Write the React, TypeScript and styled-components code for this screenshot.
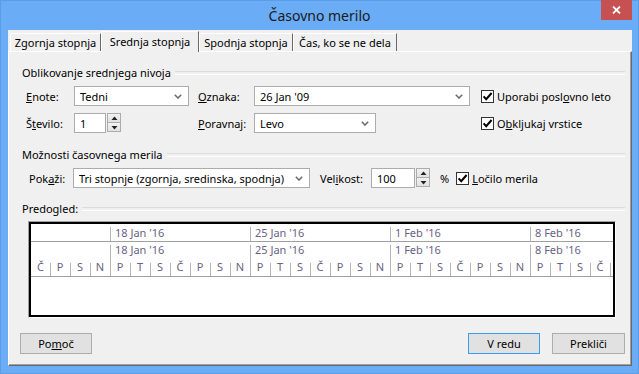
import React from 'react'
import styled, { createGlobalStyle } from 'styled-components'

const GlobalStyle = createGlobalStyle`
  html, body {
    margin: 0;
    padding: 0;
  }
  body {
    font-family: 'Noto Sans', 'Open Sans', sans-serif;
    font-size: 11px;
    color: #000;
  }
  * {
    box-sizing: border-box;
  }
`

const Window = styled.div`
  width: 639px;
  height: 374px;
  background: #6aacf5;
  display: flex;
  flex-direction: column;
  box-shadow: inset 0 0 0 1px #5c9de6;
`

const TitleBar = styled.div`
  height: 30px;
  flex: none;
  display: grid;
  grid-template-columns: 1fr auto 1fr;
  align-items: center;
`

const Title = styled.div`
  grid-column: 2;
  font-size: 14px;
  color: #1a1a1a;
  padding-top: 1px;
`

const CloseButton = styled.div`
  grid-column: 3;
  justify-self: end;
  align-self: start;
  width: 31px;
  height: 20px;
  margin-right: 7px;
  background: #c75050;
  display: flex;
  align-items: center;
  justify-content: center;
`

const Body = styled.div`
  flex: 1;
  margin: 0 7px 8px 8px;
  background: #f0f0f0;
  display: flex;
  flex-direction: column;
`

const TabStrip = styled.div`
  height: 21px;
  flex: none;
  display: flex;
  align-items: flex-end;
  padding-left: 2px;
`

const Tab = styled.div<{ $w: number; $active?: boolean }>`
  width: ${(p) => p.$w}px;
  height: ${(p) => (p.$active ? 21 : 18)}px;
  margin-bottom: ${(p) => (p.$active ? -1 : 0)}px;
  position: relative;
  z-index: ${(p) => (p.$active ? 1 : 0)};
  background: #f0f0f0;
  border-top: 1px solid #fff;
  border-left: 1px solid #fff;
  border-right: 1px solid #696969;
  display: flex;
  align-items: center;
  justify-content: center;
  padding-bottom: ${(p) => (p.$active ? 2 : 0)}px;
  white-space: nowrap;
`

const Panel = styled.div`
  flex: 1;
  display: flex;
  flex-direction: column;
  border-top: 1px solid #fff;
  border-left: 1px solid #fff;
  border-right: 1px solid #696969;
  border-bottom: 1px solid #696969;
  box-shadow: inset -1px -1px 0 #a0a0a0;
  padding: 13px 6px 11px 13px;
`

const GroupHeader = styled.div<{ $top: number }>`
  height: 14px;
  flex: none;
  margin-top: ${(p) => p.$top}px;
  display: flex;
  align-items: center;
  gap: 4px;
  white-space: nowrap;

  &::after {
    content: '';
    flex: 1;
    height: 2px;
    border-top: 1px solid #dcdcdc;
    border-bottom: 1px solid #fff;
    margin-top: 1px;
  }
`

const FormGrid = styled.div`
  margin-top: 7px;
  padding-left: 4px;
  display: grid;
  grid-template-columns: 48px 124px 56px 227px auto;
  grid-auto-rows: 20px;
  row-gap: 7px;
  align-items: center;
  justify-items: start;
`

const InlineRow = styled.div`
  margin-top: 7px;
  padding-left: 7px;
  height: 20px;
  display: flex;
  align-items: center;
`

const Label = styled.span<{ $w?: number; $ml?: number }>`
  width: ${(p) => (p.$w ? `${p.$w}px` : 'auto')};
  margin-left: ${(p) => p.$ml || 0}px;
  flex: none;
  white-space: nowrap;
`

const Combo = styled.div<{ $w: number }>`
  width: ${(p) => p.$w}px;
  height: 20px;
  flex: none;
  background: #fff;
  border: 1px solid #acacac;
  display: flex;
  align-items: center;
  justify-content: space-between;
  padding: 0 6px 0 5px;
  white-space: nowrap;
`

const SpinWrap = styled.div`
  display: flex;
  align-items: flex-start;
  gap: 1px;
  flex: none;
  height: 20px;
`

const SpinField = styled.div<{ $w: number }>`
  width: ${(p) => p.$w}px;
  height: 20px;
  background: #fff;
  border: 1px solid #acacac;
  display: flex;
  align-items: center;
  padding-left: 5px;
`

const SpinButtons = styled.div`
  display: flex;
  flex-direction: column;
  width: 14px;
  height: 19px;
`

const SpinBtn = styled.div`
  flex: 1;
  border: 1px solid #acacac;
  background: linear-gradient(#f2f2f2, #e2e2e2);
  display: flex;
  align-items: center;
  justify-content: center;

  & + & {
    border-top: none;
  }
`

const Check = styled.label<{ $ml?: number }>`
  display: flex;
  align-items: center;
  gap: 3px;
  margin-left: ${(p) => p.$ml || 0}px;
  white-space: nowrap;
`

const Box = styled.span`
  width: 13px;
  height: 13px;
  flex: none;
  background: #fff;
  border: 1px solid #333;
  display: flex;
  align-items: center;
  justify-content: center;
`

const PreviewFrame = styled.div`
  margin: 6px 0 0 6px;
  width: 588px;
  height: 97px;
  flex: none;
  border-top: 1px solid #a0a0a0;
  border-left: 1px solid #a0a0a0;
  border-right: 1px solid #fff;
  border-bottom: 1px solid #fff;
`

const PreviewCanvas = styled.div`
  height: 100%;
  background: #fff;
  border: 2px solid #000;
  overflow: hidden;
  color: #6b6282;
`

const Tier = styled.div<{ $h: number; $line?: boolean }>`
  height: ${(p) => p.$h}px;
  display: flex;
  border-bottom: ${(p) => (p.$line ? '1px solid #a0a0a0' : 'none')};
  box-sizing: content-box;
  line-height: ${(p) => p.$h}px;
`

const WeekCell = styled.div<{ $w: number; $tick: number }>`
  width: ${(p) => p.$w}px;
  flex: none;
  padding-left: 5px;
  white-space: nowrap;
  background: ${(p) =>
    p.$tick ? `linear-gradient(#b4b4b4, #b4b4b4) no-repeat left bottom / 1px ${p.$tick}px` : 'none'};
`

const DayCell = styled.div<{ $w: number; $tick: number }>`
  width: ${(p) => p.$w}px;
  flex: none;
  text-align: center;
  background: ${(p) =>
    p.$tick ? `linear-gradient(#b4b4b4, #b4b4b4) no-repeat left bottom / 1px ${p.$tick}px` : 'none'};
`

const ButtonRow = styled.div`
  margin: 15px 0 0 -2px;
  display: flex;
  align-items: center;
`

const Button = styled.div<{ $w: number; $primary?: boolean; $push?: boolean }>`
  width: ${(p) => p.$w}px;
  height: 21px;
  margin-left: ${(p) => (p.$push ? 'auto' : '0')};
  margin-right: ${(p) => (p.$primary ? 12 : 0)}px;
  background: #e1e1e1;
  border: 1px solid ${(p) => (p.$primary ? '#3c9af0' : '#adadad')};
  display: flex;
  align-items: center;
  justify-content: center;
`

const Chevron = () => (
  <svg width="8" height="5" viewBox="0 0 8 5">
    <path d="M0.8 0.8 L4 4 L7.2 0.8" fill="none" stroke="#6d6d6d" strokeWidth="1.6" />
  </svg>
)

const Tick = () => (
  <svg width="11" height="11" viewBox="0 0 11 11">
    <path d="M1.6 5.4 L4.2 8.2 L9.6 2" fill="none" stroke="#000" strokeWidth="2" />
  </svg>
)

const Spinner: React.FC<{ value: string; w: number }> = ({ value, w }) => (
  <SpinWrap>
    <SpinField $w={w}>{value}</SpinField>
    <SpinButtons>
      <SpinBtn>
        <svg width="7" height="5" viewBox="0 0 7 5">
          <path d="M3.5 0.5 L6.5 4 H0.5 Z" fill="#222" />
        </svg>
      </SpinBtn>
      <SpinBtn>
        <svg width="7" height="5" viewBox="0 0 7 5">
          <path d="M0.5 1 H6.5 L3.5 4.5 Z" fill="#222" />
        </svg>
      </SpinBtn>
    </SpinButtons>
  </SpinWrap>
)

const weeks = ["18 Jan '16", "25 Jan '16", "1 Feb '16", "8 Feb '16"]
const week = ['P', 'T', 'S', 'Č', 'P', 'S', 'N']
const days = ['Č', 'P', 'S', 'N', ...week, ...week, ...week, 'P', 'T', 'S', 'Č', '']

const Preview = () => (
  <PreviewFrame>
    <PreviewCanvas>
      <Tier $h={17} $line>
        <WeekCell $w={79} $tick={0} />
        {weeks.map((w) => (
          <WeekCell key={w} $w={140} $tick={14}>
            {w}
          </WeekCell>
        ))}
      </Tier>
      <Tier $h={16}>
        <WeekCell $w={79} $tick={0} />
        {weeks.map((w) => (
          <WeekCell key={w} $w={140} $tick={13}>
            {w}
          </WeekCell>
        ))}
      </Tier>
      <Tier $h={18} $line>
        {days.map((d, i) => (
          <DayCell key={i} $w={i === 0 ? 19 : 20} $tick={i === 0 ? 0 : (i - 4) % 7 === 0 ? 18 : 13}>
            {d}
          </DayCell>
        ))}
      </Tier>
    </PreviewCanvas>
  </PreviewFrame>
)

export default function App() {
  return (
    <>
      <GlobalStyle />
      <Window>
        <TitleBar>
          <Title>Časovno merilo</Title>
          <CloseButton>
            <svg width="9" height="8" viewBox="0 0 9 8">
              <path d="M1 0.5 L8 7.5 M8 0.5 L1 7.5" stroke="#fff" strokeWidth="1.8" />
            </svg>
          </CloseButton>
        </TitleBar>
        <Body>
          <TabStrip>
            <Tab $w={91}>Zgornja stopnja</Tab>
            <Tab $w={98} $active>
              Srednja stopnja
            </Tab>
            <Tab $w={94}>Spodnja stopnja</Tab>
            <Tab $w={104}>Čas, ko se ne dela</Tab>
          </TabStrip>
          <Panel>
            <GroupHeader $top={0}>Oblikovanje srednjega nivoja</GroupHeader>
            <FormGrid>
              <Label>
                <u>E</u>note:
              </Label>
              <Combo $w={115}>
                Tedni
                <Chevron />
              </Combo>
              <Label>
                <u>O</u>znaka:
              </Label>
              <Combo $w={216}>
                26 Jan '09
                <Chevron />
              </Combo>
              <Check>
                <Box>
                  <Tick />
                </Box>
                <span>
                  Uporabi posl<u>o</u>vno leto
                </span>
              </Check>

              <Label>
                Š<u>t</u>evilo:
              </Label>
              <Spinner value="1" w={32} />
              <Label>
                <u>P</u>oravnaj:
              </Label>
              <Combo $w={122}>
                Levo
                <Chevron />
              </Combo>
              <Check>
                <Box>
                  <Tick />
                </Box>
                <span>
                  O<u>b</u>kljukaj vrstice
                </span>
              </Check>
            </FormGrid>

            <GroupHeader $top={14}>Možnosti časovnega merila</GroupHeader>
            <InlineRow>
              <Label $w={44}>
                Pok<u>a</u>ži:
              </Label>
              <Combo $w={237}>
                Tri stopnje (zgornja, sredinska, spodnja)
                <Chevron />
              </Combo>
              <Label $w={51} $ml={10}>
                Vel<u>i</u>kost:
              </Label>
              <Spinner value="100" w={44} />
              <Label $ml={10}>%</Label>
              <Check $ml={7}>
                <Box>
                  <Tick />
                </Box>
                <span>
                  <u>L</u>očilo merila
                </span>
              </Check>
            </InlineRow>

            <GroupHeader $top={13}>Predogled:</GroupHeader>
            <Preview />

            <ButtonRow>
              <Button $w={72}>
                Po<u>m</u>oč
              </Button>
              <Button $w={72} $primary $push>
                V redu
              </Button>
              <Button $w={73}>Prekliči</Button>
            </ButtonRow>
          </Panel>
        </Body>
      </Window>
    </>
  )
}
